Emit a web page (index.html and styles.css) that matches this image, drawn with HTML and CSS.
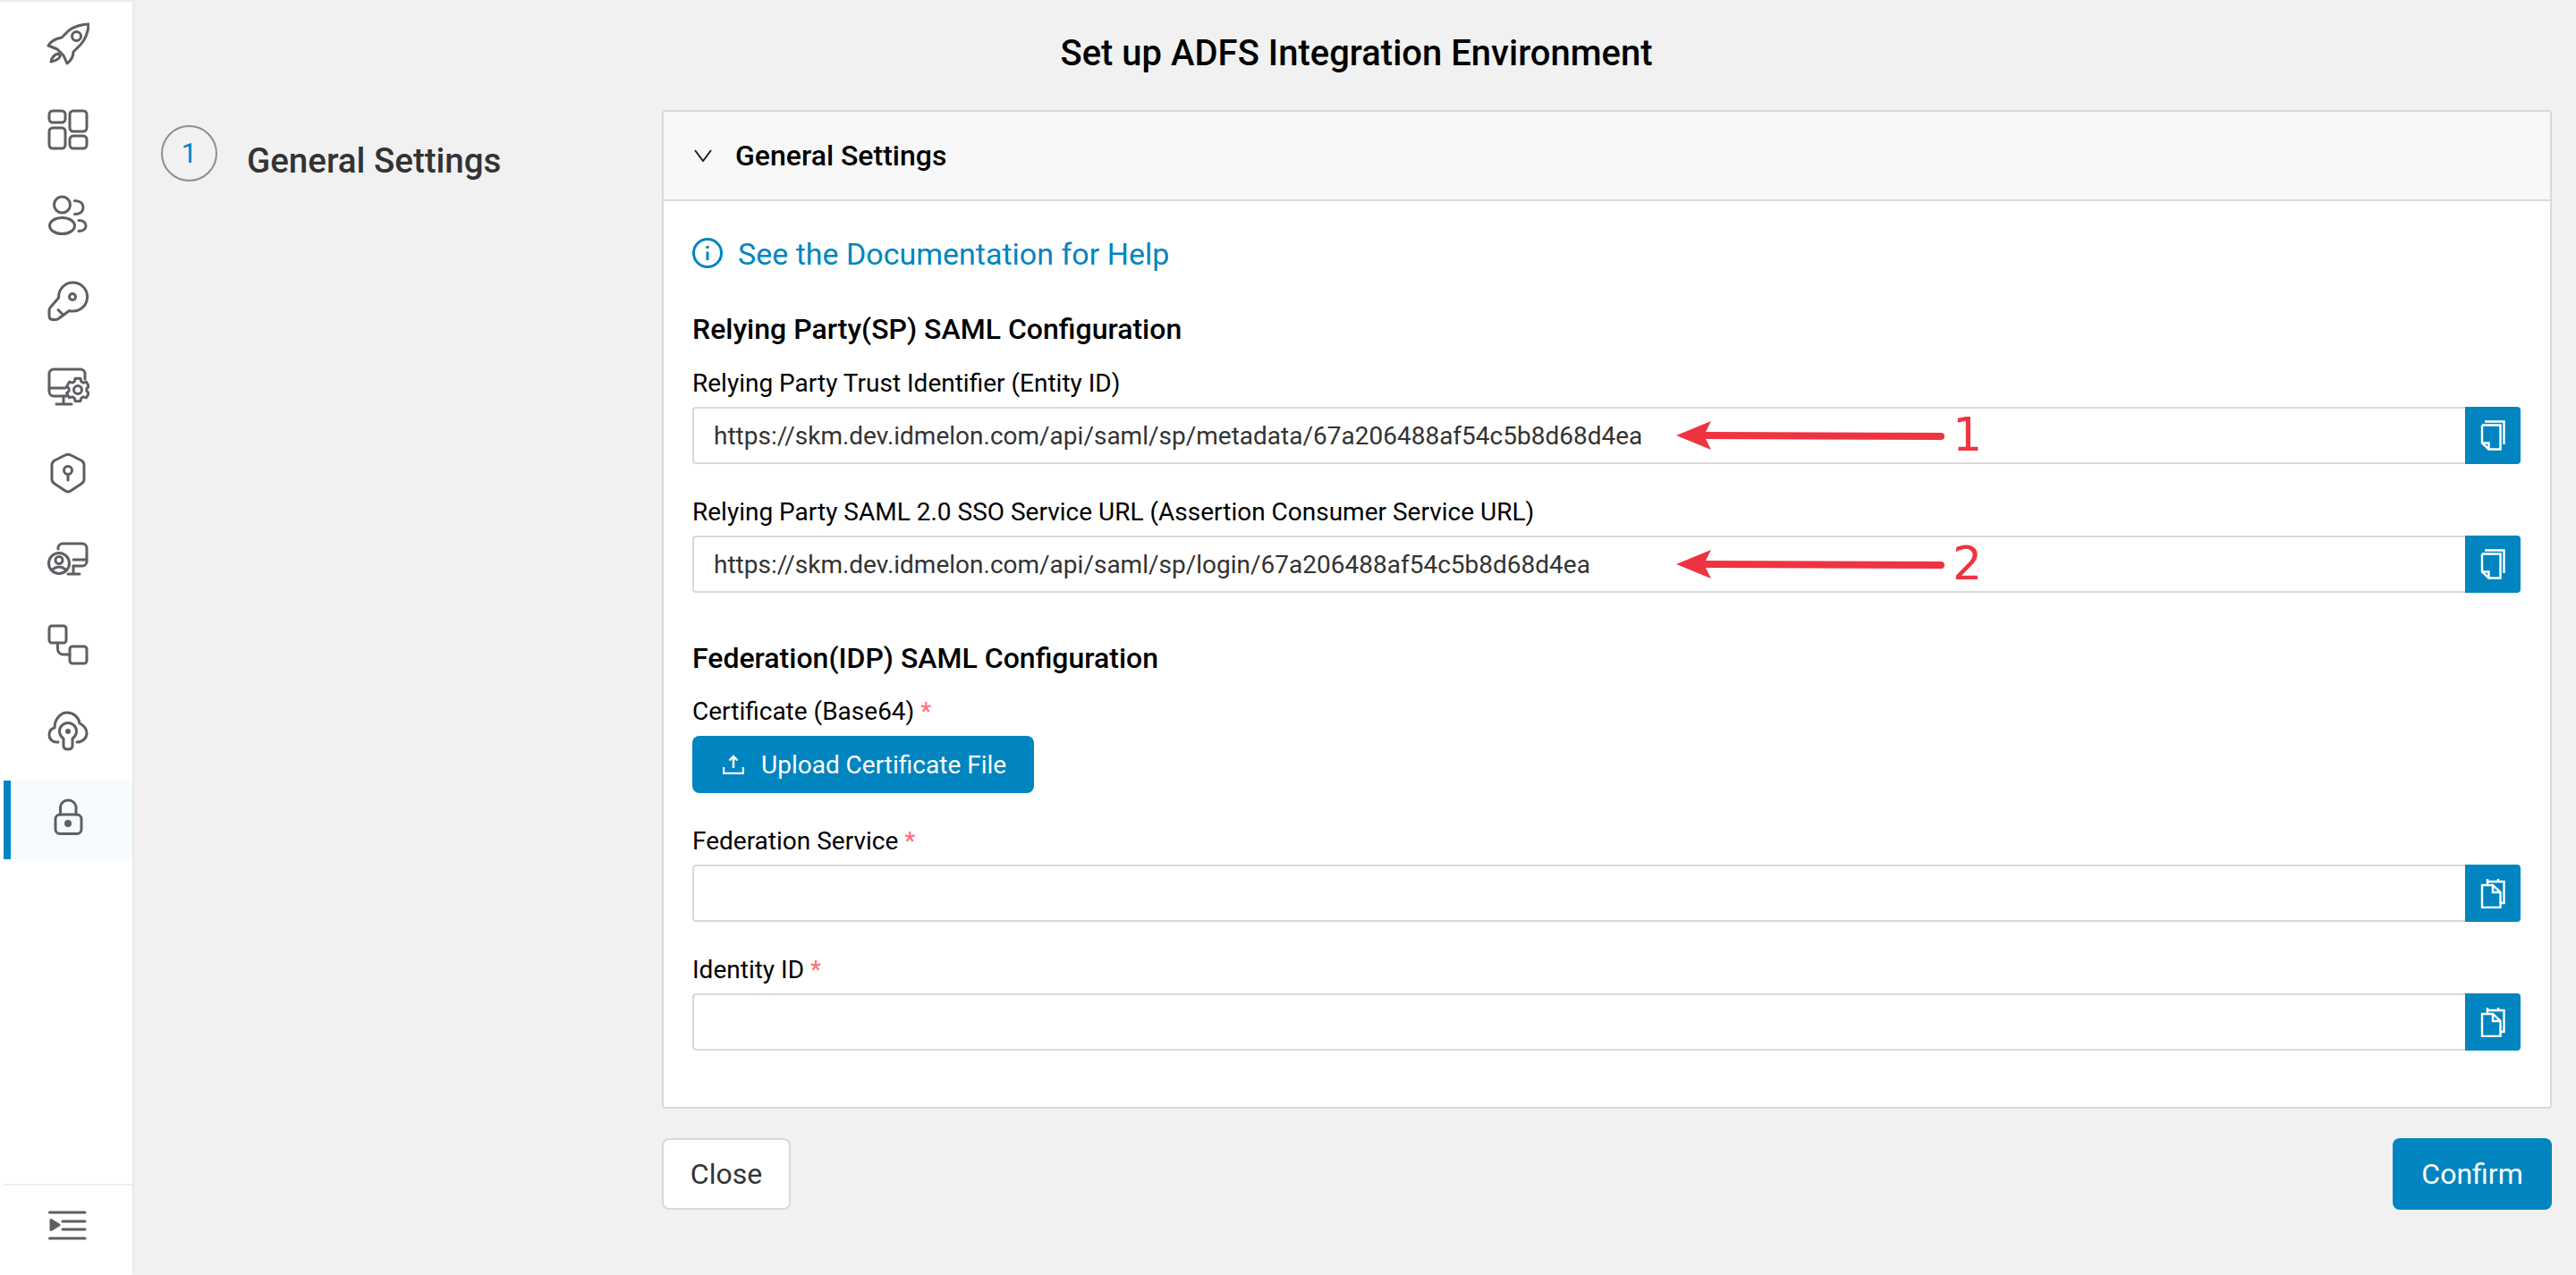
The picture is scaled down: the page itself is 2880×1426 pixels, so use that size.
FILE: index.html
```html
<!DOCTYPE html>
<html lang="en">
<head>
  <meta charset="UTF-8" />
  <title>Set up ADFS Integration Environment</title>
  <link rel="stylesheet" href="styles.css">
</head>
<body>
  <div class="app">
    <!-- Sidebar -->
    <nav class="sidebar">
      <div class="menu">
        <a class="menu-item">
          <svg class="nav-icon" viewBox="0 0 48 48"><path d="M47 2C40 2 30 5 25 9L17 17C11 18 5 21 2 26L12 30L19 37L23 46C27 43 30 38 30 33L38 25C43 20 47 10 47 2Z"/><circle cx="33.5" cy="15.5" r="5"/><path d="M13 35C9 36 6 39 5 44C10 43 14 41 15.5 37.5Z"/></svg>
        </a>
        <a class="menu-item">
          <svg class="nav-icon" viewBox="0 0 48 48"><rect x="3" y="3" width="18" height="13" rx="4"/><rect x="3" y="22" width="18" height="23" rx="4"/><rect x="26" y="3" width="19" height="23" rx="4"/><rect x="26" y="31" width="19" height="14" rx="4"/></svg>
        </a>
        <a class="menu-item">
          <svg class="nav-icon" viewBox="0 0 48 48"><circle cx="17.5" cy="12" r="9"/><ellipse cx="17.5" cy="35.5" rx="14" ry="9"/><path d="M31.5 7.5C38 7.5 41 11 41 15C41 19 38 22.5 31.5 22.5"/><path d="M36 29.5C41 29.5 44 32 44 35.5C44 39 41 41.5 36 41.5"/></svg>
        </a>
        <a class="menu-item">
          <svg class="nav-icon" viewBox="0 0 48 48"><path d="M13.6 20L4.5 30.5Q3 32 3 34.5V40Q3 44.5 7.5 44.5H10Q12.5 44.5 14 43L25.5 34.5A16 16 0 1 0 13.6 20Z"/><circle cx="29" cy="19" r="3.5"/><path d="M13 33.5L18 38.5"/></svg>
        </a>
        <a class="menu-item">
          <svg class="nav-icon" viewBox="0 0 48 48"><path d="M43 15V9A5 5 0 0 0 38 4H8A5 5 0 0 0 3 9V29A5 5 0 0 0 8 34H22"/><path d="M3 25H21"/><path d="M19 34V43M11 43H28"/><polygon points="31.25,17.73 32.1,14.3 37.9,14.3 38.75,17.73 41.16,19.12 44.5,18.13 47.4,23.2 44.9,25.61 44.9,28.39 47.4,30.8 44.5,35.87 41.16,34.88 38.75,36.27 37.9,39.7 32.1,39.7 31.25,36.27 28.84,34.88 25.5,35.87 22.6,30.8 25.1,28.39 25.1,25.61 22.6,23.2 25.5,18.13 28.84,19.12"/><circle cx="35" cy="27" r="4.5"/></svg>
        </a>
        <a class="menu-item">
          <svg class="nav-icon" viewBox="0 0 48 48"><path d="M21 4Q24 2.5 27 4L39 10Q42 12 42 15V31Q42 34 39 36L27 44Q24 46 21 44L9 36Q6 34 6 31V15Q6 12 9 10Z"/><circle cx="24" cy="21" r="4.5"/><path d="M24 25.5V32"/></svg>
        </a>
        <a class="menu-item">
          <svg class="nav-icon" viewBox="0 0 48 48"><path d="M13 13V12A5 5 0 0 1 18 7H40A5 5 0 0 1 45 12V27A5 5 0 0 1 40 32H30"/><path d="M30 25H45"/><path d="M30 32V41M24 41H37"/><circle cx="14" cy="29" r="11.5"/><circle cx="14" cy="25.5" r="4"/><path d="M6.5 36Q14 30 21.5 36"/></svg>
        </a>
        <a class="menu-item">
          <svg class="nav-icon" viewBox="0 0 48 48"><rect x="3" y="3" width="19" height="19" rx="3"/><rect x="26" y="26" width="19" height="19" rx="3"/><path d="M12.5 22V29A6 6 0 0 0 18.5 35H26"/></svg>
        </a>
        <a class="menu-item">
          <svg class="nav-icon" viewBox="0 0 48 48"><path d="M13 37H11C6 37 3 33 3 29C3 25 5 22 9 21C9 11 16 4 23 4C30 4 36 9 37 16C41 18 45 22 45 27C45 33 40 37 34 37"/><path d="M19 33A9.5 9.5 0 1 1 29 33V41Q29 45 24 45Q19 45 19 41Z"/><circle class="dot" cx="24" cy="25" r="1.5"/></svg>
        </a>
        <a class="menu-item active">
          <svg class="nav-icon" viewBox="0 0 48 48"><rect x="10" y="22" width="29" height="21.5" rx="5"/><path d="M15.5 22V13A9 9 0 0 1 33 13V22"/><circle class="dot" cx="24" cy="32" r="2.5"/></svg>
        </a>
      </div>
      <div class="sidebar-bottom">
        <svg class="nav-icon" viewBox="0 0 48 48"><path d="M3.5 10H43M18 20H43M18 29H43M3.5 39H43"/><path class="dot" d="M5 18.5L14 24L5 29.5Z"/></svg>
      </div>
    </nav>

    <main class="main">
      <h1 class="page-title">Set up ADFS Integration Environment</h1>

      <div class="wizard">
        <div class="steps">
          <div class="step-num">1</div>
          <div class="step-name">General Settings</div>
        </div>

        <div class="content">
          <section class="card">
            <div class="card-header">
              <svg class="chevron" viewBox="0 0 20 14"><path d="M1 1L10 13L19 1"/></svg>
              <span>General Settings</span>
            </div>

            <div class="card-body">
              <a class="doc-link">
                <svg class="info-icon" viewBox="0 0 34 34"><circle cx="17" cy="17" r="15.5"/><path d="M17 15.5V25"/><circle class="info-dot" cx="17" cy="10.5" r="1.8"/></svg>
                <span class="doc-text">See the Documentation for Help</span>
              </a>

              <h3 class="section-title">Relying Party(SP) SAML Configuration</h3>

              <div class="field">
                <label>Relying Party Trust Identifier (Entity ID)</label>
                <div class="input-row">
                  <input type="text" value="https://skm.dev.idmelon.com/api/saml/sp/metadata/67a206488af54c5b8d68d4ea" />
                  <button class="icon-btn">
                    <svg class="btn-icon" viewBox="0 0 28 34"><path d="M5 1.5H26.5V27"/><path d="M2 5.5H22.5V32.5H9.5V25.5H2.5M2 5.5V25.5L9.5 32.5"/></svg>
                  </button>
                  <svg class="arrow" viewBox="0 0 302 34"><path d="M0 17L39 1L31 17L39 33Z"/><path class="arrow-line" d="M28 17L296 18"/></svg>
                  <span class="arrow-num">1</span>
                </div>
              </div>

              <div class="field">
                <label>Relying Party SAML 2.0 SSO Service URL (Assertion Consumer Service URL)</label>
                <div class="input-row">
                  <input type="text" value="https://skm.dev.idmelon.com/api/saml/sp/login/67a206488af54c5b8d68d4ea" />
                  <button class="icon-btn">
                    <svg class="btn-icon" viewBox="0 0 28 34"><path d="M5 1.5H26.5V27"/><path d="M2 5.5H22.5V32.5H9.5V25.5H2.5M2 5.5V25.5L9.5 32.5"/></svg>
                  </button>
                  <svg class="arrow" viewBox="0 0 302 34"><path d="M0 17L39 1L31 17L39 33Z"/><path class="arrow-line" d="M28 17L296 18"/></svg>
                  <span class="arrow-num">2</span>
                </div>
              </div>

              <h3 class="section-title">Federation(IDP) SAML Configuration</h3>

              <div class="field">
                <label>Certificate (Base64) <span class="req">*</span></label>
                <button class="upload-btn">
                  <svg class="upload-icon" viewBox="0 0 24 22"><path d="M12 15V2M7.5 6.5L12 2L16.5 6.5"/><path d="M1 14V21H23V14"/></svg>
                  Upload Certificate File
                </button>
              </div>

              <div class="field">
                <label>Federation Service <span class="req">*</span></label>
                <div class="input-row">
                  <input type="text" />
                  <button class="icon-btn">
                    <svg class="btn-icon" viewBox="0 0 28 34"><path d="M8 7V4H26.5V28H22"/><path d="M8 4V1M20 4V1"/><path d="M2 8H14L22.5 16V33H2Z"/><path d="M14 8V16H22.5"/></svg>
                  </button>
                </div>
              </div>

              <div class="field">
                <label>Identity ID <span class="req">*</span></label>
                <div class="input-row">
                  <input type="text" />
                  <button class="icon-btn">
                    <svg class="btn-icon" viewBox="0 0 28 34"><path d="M8 7V4H26.5V28H22"/><path d="M8 4V1M20 4V1"/><path d="M2 8H14L22.5 16V33H2Z"/><path d="M14 8V16H22.5"/></svg>
                  </button>
                </div>
              </div>
            </div>
          </section>

          <div class="actions">
            <button class="btn-close">Close</button>
            <button class="btn-confirm">Confirm</button>
          </div>
        </div>
      </div>
    </main>
  </div>
</body>
</html>
```

FILE: styles.css
```css
* {
  box-sizing: border-box;
}

body {
  margin: 0;
  font-family: Roboto, Arial, sans-serif;
  background: #f1f1f1;
  color: #000;
}

.app {
  display: flex;
  height: 1426px;
  overflow: hidden;
}

/* sidebar */
.sidebar {
  width: 148px;
  flex-shrink: 0;
  background: #fff;
  border-top: 2px solid #ececec;
  padding: 7px 0 0 4px;
  display: flex;
  flex-direction: column;
  box-shadow: 1px 0 3px rgba(0, 0, 0, 0.06);
}

.menu {
  flex: 1;
  display: flex;
  flex-direction: column;
  gap: 8px;
}

.menu-item {
  height: 88px;
  padding-top: 16px;
  display: flex;
  justify-content: center;
}

.menu-item.active {
  background: #f5fbff;
  box-shadow: inset 8px 0 0 #0085c0;
}

.nav-icon {
  width: 48px;
  height: 48px;
  fill: none;
  stroke: #5e5f63;
  stroke-width: 3;
  stroke-linecap: round;
  stroke-linejoin: round;
}

.nav-icon .dot {
  fill: #5e5f63;
}

.sidebar-bottom {
  height: 102px;
  border-top: 2px solid #eeeeee;
  padding-top: 20px;
  display: flex;
  justify-content: center;
}

/* main */
.main {
  flex: 1;
  min-width: 0;
  padding: 36px 27px 0 32px;
}

.page-title {
  margin: 0 0 39px;
  font-size: 40px;
  line-height: 48px;
  font-weight: 500;
  text-align: center;
}

.wizard {
  display: flex;
}

.steps {
  width: 560px;
  flex-shrink: 0;
  display: flex;
  gap: 33px;
  padding-top: 17px;
}

.step-num {
  width: 63px;
  height: 63px;
  border: 2px solid #8e8e8e;
  border-radius: 50%;
  display: flex;
  align-items: center;
  justify-content: center;
  font-size: 31px;
  color: #0085c0;
}

.step-name {
  margin-top: 18px;
  font-size: 38.5px;
  line-height: 44px;
  font-weight: 500;
  color: #333;
}

.content {
  flex: 1;
  min-width: 0;
}

.card {
  background: #fff;
  border: 2px solid #d9d9d9;
  border-radius: 4px;
}

.card-header {
  height: 100px;
  padding: 0 0 0 34px;
  display: flex;
  align-items: center;
  gap: 26px;
  background: #f8f8f8;
  border-bottom: 2px solid #d9d9d9;
  font-size: 32px;
  font-weight: 500;
}

.chevron {
  width: 20px;
  height: 14px;
  fill: none;
  stroke: #222;
  stroke-width: 2;
}

.card-body {
  padding: 38px 33px 63px 32px;
}

.doc-link {
  display: flex;
  align-items: center;
  gap: 17px;
  height: 40px;
  margin-bottom: 45px;
  font-size: 34px;
  color: #0085c0;
}

.doc-text {
  margin-top: 2px;
}

.info-icon {
  width: 34px;
  height: 34px;
  fill: none;
  stroke: #0085c0;
  stroke-width: 3;
}

.info-icon .info-dot {
  fill: #0085c0;
  stroke: none;
}

.section-title {
  margin: 0 0 21px;
  font-size: 32px;
  line-height: 40px;
  font-weight: 500;
}

.doc-link + .section-title {
  margin-bottom: 22px;
}

.field {
  margin-bottom: 35px;
}

.field:last-child {
  margin-bottom: 0;
}

.field + .section-title {
  margin-top: 53px;
}

.field label {
  display: block;
  height: 36px;
  margin-bottom: 9px;
  font-size: 28px;
  line-height: 38px;
}

.req {
  color: #ff6b72;
}

.input-row {
  position: relative;
  display: flex;
  height: 64px;
}

.input-row input {
  flex: 1;
  min-width: 0;
  height: 64px;
  padding: 0 22px;
  border: 2px solid #d9d9d9;
  border-right: none;
  border-radius: 4px 0 0 4px;
  background: #fff;
  font-family: Roboto, Arial, sans-serif;
  font-size: 28px;
  color: #333;
  outline: none;
}

.icon-btn {
  width: 62px;
  flex-shrink: 0;
  padding: 0;
  border: none;
  border-radius: 0 4px 4px 0;
  background: #0085c0;
  display: flex;
  align-items: center;
  justify-content: center;
}

.btn-icon {
  width: 28px;
  height: 34px;
  fill: none;
  stroke: #fff;
  stroke-width: 2.4;
}

/* annotations */
.arrow {
  position: absolute;
  left: 1100px;
  top: 15px;
  width: 302px;
  height: 34px;
  fill: #ef3340;
}

.arrow-line {
  fill: none;
  stroke: #ef3340;
  stroke-width: 8;
  stroke-linecap: round;
}

.arrow-num {
  position: absolute;
  left: 1409px;
  top: 0;
  font-family: "DejaVu Sans", sans-serif;
  font-size: 52px;
  line-height: 62px;
  color: #ef3340;
}

.upload-btn {
  display: flex;
  align-items: center;
  gap: 19px;
  height: 64px;
  width: 382px;
  margin-top: 10px;
  padding: 0 0 0 34px;
  border: none;
  border-radius: 8px;
  background: #0085c0;
  color: #fff;
  font-family: Roboto, Arial, sans-serif;
  font-size: 28px;
}

.upload-icon {
  width: 24px;
  height: 22px;
  fill: none;
  stroke: #fff;
  stroke-width: 2.4;
}

.actions {
  display: flex;
  justify-content: space-between;
  margin-top: 33px;
}

.btn-close,
.btn-confirm {
  height: 80px;
  border-radius: 8px;
  font-family: Roboto, Arial, sans-serif;
  font-size: 32px;
}

.btn-close {
  width: 144px;
  background: #fff;
  border: 2px solid #d9d9d9;
  color: #333;
}

.btn-confirm {
  width: 178px;
  background: #0085c0;
  border: none;
  color: #fff;
}
```
